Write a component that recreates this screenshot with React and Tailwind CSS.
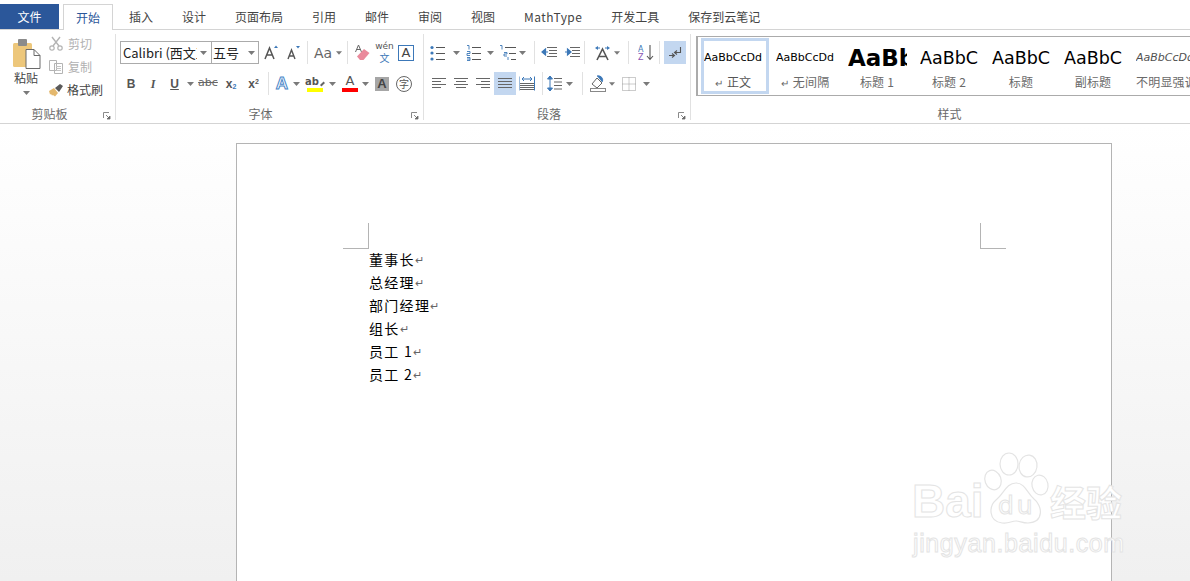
import React from "react";

const cjk = "font-['Noto_Sans_CJK_SC','Noto_Sans',sans-serif]";

function Caret({ w = "w-[10px]" }) {
  return (
    <span className={`${w} h-[23px] flex items-center justify-center shrink-0`}>
      <svg width="7" height="4" viewBox="0 0 7 4"><path d="M0 0h7L3.500 4z" fill="#7a7a7a" /></svg>
    </span>
  );
}
function Sep({ className = "" }) {
  return <span className={`w-px h-[23px] bg-[#e1e1e1] shrink-0 ${className}`} />;
}
function Slot({ w = "w-[22px]", active, children }) {
  return (
    <span className={`${w} h-[23px] flex items-center justify-center shrink-0 ${active ? "bg-[#c3d7f0]" : ""}`}>
      {children}
    </span>
  );
}
function Launcher() {
  return (
    <svg width="8" height="8" viewBox="0 0 8 8" className="absolute right-[4px] bottom-0">
      <path d="M.5 6V.5H6" fill="none" stroke="#8a8a8a" />
      <path d="M3 3l3.500 3.500M7 4v3H4z" fill="#6a6a6a" stroke="#6a6a6a" strokeWidth=".8" />
    </svg>
  );
}
function GroupLabel({ children }) {
  return (
    <div className={`absolute left-0 right-0 -bottom-[2px] text-center text-[12px] leading-[16px] text-[#6a6a6a] ${cjk}`}>
      {children}
    </div>
  );
}
function Lines({ rows, color = "#666" }) {
  return (
    <svg width="16" height="14" viewBox="0 0 16 14">
      {rows.map((r, i) => (
        <path key={i} d={`M${r[0]} ${r[2]}.5H${r[1]}`} stroke={color} fill="none" />
      ))}
    </svg>
  );
}
const Bullets = () => (
  <svg width="16" height="16" viewBox="0 0 16 16">
    <circle cx="2" cy="2.500" r="1.600" fill="#3c78b8" /><circle cx="2" cy="8" r="1.600" fill="#3c78b8" /><circle cx="2" cy="14" r="1.600" fill="#3c78b8" />
    <path d="M6 2.500h9M6 8.500h9M6 14.500h9" stroke="#555" />
  </svg>
);
const Numbers = () => (
  <svg width="16" height="16" viewBox="0 0 16 16">
    <path d="M1 .5h2v4M1 6.500h3v2H1v2h3M1 12.500h3v3H1M1 14h3" stroke="#3c78b8" fill="none" strokeWidth=".9" />
    <path d="M6 2.500h9M6 8.500h9M6 14.500h9" stroke="#555" />
  </svg>
);
const Multi = () => (
  <svg width="18" height="16" viewBox="0 0 18 16">
    <path d="M1 .5h2v4M5 7.500h3v1.500H5v2h3M9 12v3" stroke="#3c78b8" fill="none" strokeWidth=".9" />
    <path d="M6 2.500h11M10 8.500h7M12 14.500h5" stroke="#555" />
  </svg>
);
const Indent = ({ out }) => (
  <svg width="17" height="13" viewBox="0 0 17 13">
    <path d="M6 1.500h10M8 4.500h8M8 7.500h8M6 10.500h10" stroke="#666" />
    {out ? <path d="M7 6H2M4.500 3L1 6l3.500 3z" stroke="#3c78b8" fill="#3c78b8" strokeWidth="1.200" />
      : <path d="M1 6h5M3.500 3L7 6 3.500 9z" stroke="#3c78b8" fill="#3c78b8" strokeWidth="1.200" />}
  </svg>
);
const AlignI = ({ rows }) => <Lines rows={rows} />;

function ParaIcon() {
  return (
    <svg width="15" height="14" viewBox="0 0 15 14">
      <path d="M12.500 1v5.500H7M9 4.500L6.500 6.500 9 8.500" fill="none" stroke="#555" strokeWidth="1.100" />
      <path d="M1 9.500h5M4 7.500l2.500 2-2.500 2" fill="none" stroke="#555" strokeWidth="1.100" />
    </svg>
  );
}

function Clipboard() {
  return (
    <div className="relative w-[116px] shrink-0 border-r border-[#e1e1e1] mt-[4px] h-[86px]">
      <div className="flex pt-[4px] pl-[11px]">
        <div className="w-[30px] flex flex-col items-center">
          <svg width="29" height="31" viewBox="0 0 29 31">
            <rect x="1" y="5" width="19" height="24" rx="1.500" fill="#edc77b" />
            <rect x="6" y="1" width="9" height="7" rx="1" fill="#8b8b8b" />
            <path d="M14 11.500h8l6 6v13H14z" fill="#fff" stroke="#6a6a6a" />
            <path d="M22 11.500v6h6" fill="none" stroke="#6a6a6a" />
          </svg>
          <span className={`text-[12px] leading-[16px] text-[#444] mt-[1px] ${cjk}`}>粘贴</span>
          <svg width="7" height="4" viewBox="0 0 7 4" className="mt-[5px]"><path d="M0 0h7L3.500 4z" fill="#7a7a7a" /></svg>
        </div>
        <div className="ml-[8px] -mt-[6px] flex flex-col">
          <div className="h-[23px] flex items-center">
            <svg width="14" height="15" viewBox="0 0 14 15" className="mr-[5px]">
              <path d="M3 1l7 9M11 1l-7 9" stroke="#b4b4b4" strokeWidth="1.400" />
              <circle cx="3" cy="12" r="2.200" fill="none" stroke="#b4b4b4" strokeWidth="1.200" />
              <circle cx="11" cy="12" r="2.200" fill="none" stroke="#b4b4b4" strokeWidth="1.200" />
            </svg>
            <span className={`text-[12px] text-[#b1b1b1] ${cjk}`}>剪切</span>
          </div>
          <div className="h-[23px] flex items-center">
            <svg width="14" height="14" viewBox="0 0 14 14" className="mr-[5px]">
              <path d="M.5.500h7v10h-7zM5.500 3.500h8v10h-8z" fill="#fff" stroke="#b4b4b4" />
              <path d="M7 6.500h5M7 8.500h5M7 10.500h5" stroke="#c4c4c4" />
            </svg>
            <span className={`text-[12px] text-[#b1b1b1] ${cjk}`}>复制</span>
          </div>
          <div className="h-[23px] flex items-center">
            <svg width="16" height="14" viewBox="0 0 16 14" className="mr-[3px] -ml-[1px]">
              <path d="M1 8l5-3 4 5-3 3.500-2-1.500-1 .5L3 11l-1 .5z" fill="#e4b86e" />
              <path d="M7 5l5-4 3 2-4 6z" fill="#5a5a5a" />
            </svg>
            <span className={`text-[12px] text-[#444] ${cjk}`}>格式刷</span>
          </div>
        </div>
      </div>
      <GroupLabel>
        <span className="relative -left-[8px]">剪贴板</span>
      </GroupLabel>
      <Launcher />
    </div>
  );
}

const tb = "font-['DejaVu_Sans',sans-serif] leading-none";

function FontGroup() {
  return (
    <div className="relative w-[308px] shrink-0 border-r border-[#e1e1e1] h-[86px] mt-[4px]">
      <div className="pl-[4px] pt-[7px]">
        <div className="flex items-center h-[23px]">
          <div className="w-[92px] h-[23px] border border-[#ababab] flex items-center bg-white">
            <span className={`pl-[2px] w-[76px] overflow-hidden whitespace-nowrap text-[13px] text-[#222] ${cjk}`}>Calibri (西文正文)</span>
            <svg width="7" height="4" viewBox="0 0 7 4" className="ml-[3px]"><path d="M0 0h7L3.500 4z" fill="#7a7a7a" /></svg>
          </div>
          <div className="w-[47px] h-[23px] border border-l-0 border-[#ababab] flex items-center bg-white">
            <span className={`pl-[1px] w-[36px] text-[13px] text-[#222] ${cjk}`}>五号</span>
            <svg width="7" height="4" viewBox="0 0 7 4"><path d="M0 0h7L3.500 4z" fill="#7a7a7a" /></svg>
          </div>
          <Slot w="w-[22px] ml-[1px]">
            <svg width="15" height="15" viewBox="0 0 15 15"><path d="M1 14L5.500 3 10 14M3 10h5" fill="none" stroke="#555" strokeWidth="1.500" /><path d="M10 3l2-2.500L14 3z" fill="#3c78b8" /></svg>
          </Slot>
          <Slot w="w-[23px]">
            <svg width="15" height="15" viewBox="0 0 15 15"><path d="M2 14L5.500 5 9 14M3 11h5" fill="none" stroke="#555" strokeWidth="1.400" /><path d="M10 1l2 2.500L14 1z" fill="#3c78b8" /></svg>
          </Slot>
          <Sep className="mx-[2px]" />
          <span className={`w-[26px] text-center text-[14px] text-[#666] ${tb}`}>Aa</span>
          <Caret w="w-[6px]" />
          <Sep className="ml-[5px]" />
          <Slot w="w-[28px]">
            <svg width="17" height="17" viewBox="0 0 17 17">
              <path d="M1.500 8L4.500 1 7.500 8M2.500 5.500h4" fill="none" stroke="#666" />
              <path d="M3 12.500L10 5l5.500 4-6 7H6z" fill="#ea8a9c" />
            </svg>
          </Slot>
          <Slot w="w-[17px]">
            <span className="flex flex-col items-center -mt-[2px]">
              <span className="text-[9px] text-[#555] font-['DejaVu_Sans',sans-serif] leading-[11px]">wén</span>
              <span className={`text-[10px] text-[#3c78b8] leading-[11px] ${cjk}`}>文</span>
            </span>
          </Slot>
          <Slot w="w-[26px]">
            <span className={`w-[16px] h-[16px] border border-[#3c78b8] flex items-center justify-center text-[13px] text-[#444] ${tb}`}>A</span>
          </Slot>
        </div>
        <div className="flex items-center h-[23px] mt-[8px]">
          <Slot><span className="text-[12px] font-bold text-[#555] font-['Liberation_Sans',sans-serif]">B</span></Slot>
          <Slot><span className="text-[12px] italic text-[#555] font-['Liberation_Serif',serif] font-bold">I</span></Slot>
          <Slot w="w-[21px]"><span className="text-[12px] font-bold underline text-[#555] font-['Liberation_Sans',sans-serif]">U</span></Slot>
          <Caret w="w-[11px]" />
          <Slot w="w-[24px]"><span className="text-[11px] line-through text-[#666] font-['DejaVu_Sans',sans-serif]">abc</span></Slot>
          <Slot><span className="text-[12px] font-bold text-[#555] font-['Liberation_Sans',sans-serif]">x<sub className="text-[7px] text-[#3c78b8]">2</sub></span></Slot>
          <Slot w="w-[23px]"><span className="text-[12px] font-bold text-[#555] font-['Liberation_Sans',sans-serif]">x<sup className="text-[7px] text-[#555]">2</sup></span></Slot>
          <Sep className="mx-[3px]" />
          <Slot w="w-[20px]">
            <span className="text-[17px] font-bold text-white [-webkit-text-stroke:1px_#4a86c8] font-['Liberation_Sans',sans-serif]">A</span>
          </Slot>
          <Caret w="w-[8px]" />
          <Slot w="w-[26px] ml-[2px]">
            <span className="relative flex flex-col items-center">
              <span className="text-[10px] font-bold text-[#555] font-['DejaVu_Sans',sans-serif] leading-[11px]">ab<span className="inline-block w-[5px] h-[2px] bg-[#666] -rotate-45 ml-[1px]" /></span>
              <span className="w-[16px] h-[4px] bg-[#ffff00] mt-[1px]" />
            </span>
          </Slot>
          <Caret w="w-[8px]" />
          <Slot w="w-[22px] ml-[3px]">
            <span className="flex flex-col items-center">
              <span className="text-[13px] text-[#555] font-['DejaVu_Sans',sans-serif] leading-[12px]">A</span>
              <span className="w-[16px] h-[4px] bg-[#ff0000] mt-[1px]" />
            </span>
          </Slot>
          <Caret w="w-[9px]" />
          <Slot w="w-[20px] ml-[2px]">
            <span className="w-[14px] h-[14px] bg-[#a6a6a6] flex items-center justify-center text-[13px] font-bold text-[#444] font-['Liberation_Sans',sans-serif]">A</span>
          </Slot>
          <Slot w="w-[24px]">
            <span className={`w-[16px] h-[16px] rounded-full border border-[#666] flex items-center justify-center text-[10px] text-[#555] ${cjk}`}>字</span>
          </Slot>
        </div>
      </div>
      <GroupLabel>
        <span className="relative -left-[9px]">字体</span>
      </GroupLabel>
      <Launcher />
    </div>
  );
}

function ParaGroup() {
  const L = [[1, 15, 1], [1, 10, 4], [1, 15, 7], [1, 10, 10]];
  const C = [[1, 15, 1], [3, 13, 4], [1, 15, 7], [3, 13, 10]];
  const R = [[1, 15, 1], [6, 15, 4], [1, 15, 7], [6, 15, 10]];
  const J = [[1, 15, 1], [1, 15, 4], [1, 15, 7], [1, 15, 10]];
  return (
    <div className="relative w-[267px] shrink-0 border-r border-[#e1e1e1] h-[86px] mt-[4px]">
      <div className="pl-[4px] pt-[7px]">
        <div className="flex items-center h-[23px]">
          <Slot w="w-[20px]"><Bullets /></Slot>
          <Caret w="w-[16px]" />
          <Slot w="w-[20px]"><Numbers /></Slot>
          <Caret w="w-[13px]" />
          <Slot w="w-[22px]"><Multi /></Slot>
          <Caret w="w-[7px]" />
          <Sep className="ml-[8px] mr-[3px]" />
          <Slot><Indent out /></Slot>
          <Slot w="w-[24px]"><Indent /></Slot>
          <Sep className="mr-[5px]" />
          <Slot w="w-[24px]">
            <svg width="17" height="16" viewBox="0 0 17 16">
              <path d="M3 15L8.500 4 14 15M5 11.500h7" fill="none" stroke="#555" strokeWidth="1.600" />
              <path d="M1 3l3-2v4zM16 3l-3-2v4z" fill="#3c78b8" /><path d="M3 3h3M11 3h3" stroke="#3c78b8" />
            </svg>
          </Slot>
          <Caret w="w-[6px]" />
          <Sep className="ml-[8px] mr-[4px]" />
          <Slot w="w-[26px]">
            <svg width="16" height="17" viewBox="0 0 16 17">
              <text x="0" y="8" fontSize="8" fill="#3c78b8" fontFamily="DejaVu Sans">A</text>
              <text x="0" y="16" fontSize="8" fill="#8a55b5" fontFamily="DejaVu Sans">Z</text>
              <path d="M12 1v14M9 12l3 3.500 3-3.500" fill="none" stroke="#555" strokeWidth="1.100" />
            </svg>
          </Slot>
          <Sep className="mr-[4px]" />
          <Slot active><ParaIcon /></Slot>
        </div>
        <div className="flex items-center h-[23px] mt-[8px]">
          <Slot w="w-[22px]"><AlignI rows={L} /></Slot>
          <Slot><AlignI rows={C} /></Slot>
          <Slot><AlignI rows={R} /></Slot>
          <Slot active><AlignI rows={J} /></Slot>
          <Slot w="w-[22px]">
            <svg width="16" height="16" viewBox="0 0 16 16">
              <path d="M0 .5v14M15.500.5v14" stroke="#3c78b8" />
              <path d="M3 3h10M5 1l-2 2 2 2M11 1l2 2-2 2" stroke="#3c78b8" fill="none" />
              <path d="M1 7.500h14M1 9.500h14M1 11.500h14M1 13.500h14" stroke="#666" />
            </svg>
          </Slot>
          <Sep className="ml-[4px] mr-[1px]" />
          <Slot w="w-[20px]">
            <svg width="15" height="17" viewBox="0 0 15 17">
              <path d="M3 1v15M.5 4L3 1l2.500 3zM.5 13L3 16l2.500-3z" fill="#3c78b8" stroke="#3c78b8" />
              <path d="M7 3.500h8M7 7h8M7 10.500h8M7 14h8" stroke="#666" />
            </svg>
          </Slot>
          <Caret w="w-[11px]" />
          <Sep className="ml-[7px] mr-[4px]" />
          <Slot w="w-[22px]">
            <svg width="17" height="17" viewBox="0 0 17 17">
              <path d="M2 9l5-6 5 5-5 5z" fill="#fff" stroke="#666" /><path d="M7 1c4-1 7 3 5 6" stroke="#3c78b8" fill="#3c78b8" />
              <rect x=".5" y="13.500" width="15" height="3" fill="#fff" stroke="#888" />
            </svg>
          </Slot>
          <Caret w="w-[6px]" />
          <Slot w="w-[24px] ml-[2px]">
            <svg width="14" height="14" viewBox="0 0 14 14">
              <path d="M.5.500h13v13H.5zM7 .5v13M.5 7h13" fill="none" stroke="#999" strokeDasharray="1 1" />
            </svg>
          </Slot>
          <Caret w="w-[10px]" />
        </div>
      </div>
      <GroupLabel>
        <span className="relative -left-[8px]">段落</span>
      </GroupLabel>
      <Launcher />
    </div>
  );
}

function StyleItem({ sample, label, mark, sampleClass, selected }) {
  return (
    <div className={`w-[68px] mr-[4px] shrink-0 h-[56px] overflow-hidden border-[3px] ${selected ? "border-[#c3d7f0]" : "border-transparent"}`}>
      <div className="h-[34px] pt-[1px]">
        <div className={`h-[33px] w-[59px] flex items-center overflow-hidden whitespace-nowrap font-['DejaVu_Sans',sans-serif] ${sampleClass}`}>
          {sample}
        </div>
      </div>
      <div className={`w-[58px] -mt-[1px] text-[12px] leading-[16px] whitespace-nowrap tracking-[.2px] text-center ${selected ? "text-[#555]" : "text-[#6a6a6a]"} ${cjk}`}>
        {mark && <span className="text-[#666] text-[10px] mr-[4px]">↵</span>}
        {label}
      </div>
    </div>
  );
}

function Styles() {
  return (
    <div className="relative flex-1 min-w-0 h-[86px] mt-[4px]">
      <div className="ml-[5px] mt-[2px] h-[60px] border border-r-0 border-[#ababab] border-l-2 flex pt-[1px] pl-[3px] overflow-hidden">
        <StyleItem selected sample="AaBbCcDd" label="正文" mark sampleClass="text-[11px] text-black" />
        <StyleItem sample="AaBbCcDd" label="无间隔" mark sampleClass="text-[11px] text-black" />
        <StyleItem sample="AaBb" label="标题 1" sampleClass="text-[23px] font-bold text-black" />
        <StyleItem sample="AaBbC" label="标题 2" sampleClass="text-[17.5px] text-black" />
        <StyleItem sample="AaBbC" label="标题" sampleClass="text-[17.5px] text-black" />
        <StyleItem sample="AaBbC" label="副标题" sampleClass="text-[17.5px] text-black" />
        <StyleItem sample="AaBbCcDd" label="不明显强调" sampleClass="text-[11px] italic text-[#505050]" />
      </div>
      <GroupLabel>
        <span className="relative left-[9px]">样式</span>
      </GroupLabel>
    </div>
  );
}

function Watermark() {
  const stroke = "text-white [-webkit-text-stroke:1px_#e4e4e4]";
  return (
    <div className="absolute left-[912px] top-[452px] w-[224px] h-[118px] pointer-events-none">
      <svg width="80" height="76" viewBox="0 0 80 76" className="absolute left-[68px] top-[-2px]">
        <g fill="rgba(255,255,255,.85)" stroke="#e4e4e4" strokeWidth="1.200">
          <ellipse cx="13" cy="30" rx="8" ry="10" transform="rotate(-20 13 30)" />
          <ellipse cx="29" cy="14" rx="9" ry="11" />
          <ellipse cx="48" cy="16" rx="9" ry="11" transform="rotate(8 48 16)" />
          <ellipse cx="60" cy="35" rx="8" ry="10" transform="rotate(-12 60 35)" />
          <path d="M36 33c9 0 11 10 18 16 8 6 11 23-6 24-6 0-8-2-12-2-5 0-7 3-14 2-14-2-13-17-6-23 8-6 10-17 20-17z" />
        </g>
      </svg>
      <span className={`absolute left-[0px] top-[26px] text-[46px] font-bold leading-none font-['Liberation_Sans',sans-serif] ${stroke}`}>Bai</span>
      <span className={`absolute left-[86px] top-[41px] text-[25px] leading-none tracking-[3px] font-['DejaVu_Sans',sans-serif] ${stroke}`}>du</span>
      <span className={`absolute left-[138px] top-[31px] text-[36px] font-bold leading-none whitespace-nowrap ${cjk} ${stroke}`}>经验</span>
      <span className={`absolute left-[1px] top-[79px] text-[25px] leading-none whitespace-nowrap font-['Liberation_Sans',sans-serif] tracking-[.6px] ${stroke}`}>jingyan.baidu.com</span>
    </div>
  );
}

export default function App() {
  const tabs = ["设计", "页面布局", "引用", "邮件", "审阅", "视图"];
  const lines = ["董事长", "总经理", "部门经理", "组长", "员工 1", "员工 2"];
  return (
    <div className={`relative w-[1190px] h-[581px] overflow-hidden bg-white ${cjk}`}>
      <div className="h-[30px] border-b border-[#d4d4d4] flex items-end text-[12px] text-[#444]">
        <div className="w-[59px] h-[25px] bg-[#2b579a] text-white flex items-center justify-center">文件</div>
        <div className="ml-[4px] w-[50px] h-[26px] bg-white border border-b-0 border-[#d4d4d4] text-[#2b579a] flex items-center justify-center -mb-px">开始</div>
        <div className="ml-[16px] h-[25px] flex items-center">插入</div>
        <div className="ml-[29px] h-[25px] flex items-center gap-[29px] whitespace-nowrap">
          {tabs.map((t) => <span key={t}>{t}</span>)}
          <span className="tracking-[.4px]">MathType</span>
          <span>开发工具</span>
          <span>保存到云笔记</span>
        </div>
      </div>
      <div className="h-[94px] border-b border-[#d4d4d4] flex bg-white">
        <Clipboard />
        <FontGroup />
        <ParaGroup />
        <Styles />
      </div>
      <div className="h-[457px] bg-gradient-to-b from-white to-[#f0f0f0] pt-[19px] pl-[236px]">
        <div className="w-[876px] h-[500px] bg-white border border-[#b4b4b4] relative">
          <div className="absolute left-[106px] top-[79px] w-[26px] h-[26px] border-r border-b border-[#b4b4b4]" />
          <div className="absolute left-[743px] top-[79px] w-[26px] h-[26px] border-l border-b border-[#b4b4b4]" />
          <div className="pt-[104px] pl-[132px] text-[14px] leading-[23px] text-black tracking-[1.3px]">
            {lines.map((l) => (
              <div key={l} className="flex items-center h-[23px]">
                <span className="whitespace-pre">{l}</span>
                <span className="text-[11px] text-[#666] tracking-normal">↵</span>
              </div>
            ))}
          </div>
        </div>
      </div>
      <Watermark />
    </div>
  );
}
